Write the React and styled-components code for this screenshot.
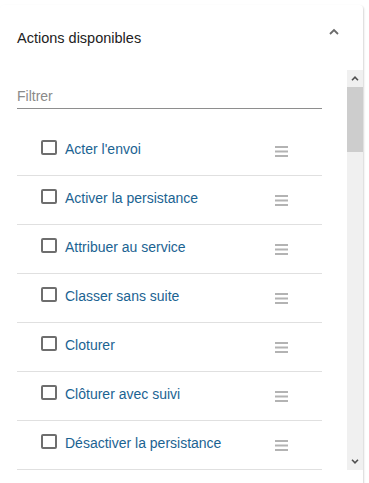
import React from "react";
import styled, { createGlobalStyle } from "styled-components";

const GlobalStyle = createGlobalStyle`
  html, body {
    margin: 0;
    padding: 0;
    background: #ffffff;
    font-family: "Liberation Sans", Arial, sans-serif;
    overflow: hidden;
  }
`;

const Card = styled.section`
  margin-top: 5px;
  width: 363px;
  height: 500px;
  background: #fff;
  border-radius: 4px;
  box-shadow: 1px 1px 2px rgba(0, 0, 0, 0.16);
  display: flex;
  flex-direction: column;
`;

const Header = styled.header`
  height: 65px;
  box-sizing: border-box;
  padding: 25px 23px 0 17px;
  display: flex;
  align-items: flex-start;
  justify-content: space-between;
`;

const Title = styled.h2`
  margin: 0;
  font-size: 14.5px;
  font-weight: 400;
  line-height: 17px;
  color: #222;
`;

const Chevron = styled.svg`
  margin-top: -4px;
  display: block;
`;

const Body = styled.div`
  display: flex;
  height: 400px;
`;

const ScrollContent = styled.div`
  flex: 1;
  overflow: hidden;
  padding: 0 25px 0 17px;
`;

const FilterField = styled.div`
  padding: 18px 0 4px;
  border-bottom: 1px solid #8e8e8e;
  font-size: 14px;
  line-height: 16px;
  color: #8a8a8a;
`;

const List = styled.ul`
  list-style: none;
  margin: 18px 0 0;
  padding: 0;
`;

const Row = styled.li`
  border-bottom: 1px solid #e0e0e0;
  display: flex;
  align-items: flex-start;
  padding: 13px 34px 0 24px;
  box-sizing: border-box;
  height: 49px;
`;

const Box = styled.span`
  width: 16px;
  height: 15px;
  box-sizing: border-box;
  border: 2px solid #6e6e6e;
  border-radius: 2px;
  flex: none;
`;

const Label = styled.span`
  flex: 1;
  margin-left: 8px;
  margin-top: 1px;
  font-size: 14px;
  line-height: 16px;
  color: #1b6392;
  white-space: nowrap;
`;

const Handle = styled.svg`
  margin-top: 6px;
  display: block;
  flex: none;
`;

const Scrollbar = styled.div`
  width: 16px;
  flex: none;
  background: #f0f0f0;
  display: flex;
  flex-direction: column;
`;

const ScrollButton = styled.div`
  height: 17px;
  display: flex;
  align-items: center;
  justify-content: center;
`;

const Thumb = styled.div`
  height: 65px;
  background: #cdcdcd;
`;

const Track = styled.div`
  flex: 1;
`;

const actions = [
  "Acter l'envoi",
  "Activer la persistance",
  "Attribuer au service",
  "Classer sans suite",
  "Cloturer",
  "Clôturer avec suivi",
  "Désactiver la persistance",
];

export default function App() {
  return (
    <>
      <GlobalStyle />
      <Card>
        <Header>
          <Title>Actions disponibles</Title>
          <Chevron width="12" height="12" viewBox="0 0 12 12">
            <polyline points="2,8 6,4 10,8" fill="none" stroke="#6a6a6a" strokeWidth="1.8" />
          </Chevron>
        </Header>
        <Body>
          <ScrollContent>
            <FilterField>Filtrer</FilterField>
            <List>
              {actions.map((a) => (
                <Row key={a}>
                  <Box />
                  <Label>{a}</Label>
                  <Handle width="13" height="11" viewBox="0 0 13 11">
                    <rect x="0" y="0" width="13" height="2" fill="#b3b3b3" />
                    <rect x="0" y="4.5" width="13" height="2" fill="#b3b3b3" />
                    <rect x="0" y="9" width="13" height="2" fill="#b3b3b3" />
                  </Handle>
                </Row>
              ))}
            </List>
          </ScrollContent>
          <Scrollbar>
            <ScrollButton>
              <svg width="8" height="5" viewBox="0 0 8 5">
                <polyline points="1,4.2 4,1.2 7,4.2" fill="none" stroke="#505050" strokeWidth="1.6" />
              </svg>
            </ScrollButton>
            <Thumb />
            <Track />
            <ScrollButton>
              <svg width="8" height="5" viewBox="0 0 8 5">
                <polyline points="1,0.8 4,3.8 7,0.8" fill="none" stroke="#505050" strokeWidth="1.6" />
              </svg>
            </ScrollButton>
          </Scrollbar>
        </Body>
      </Card>
    </>
  );
}
